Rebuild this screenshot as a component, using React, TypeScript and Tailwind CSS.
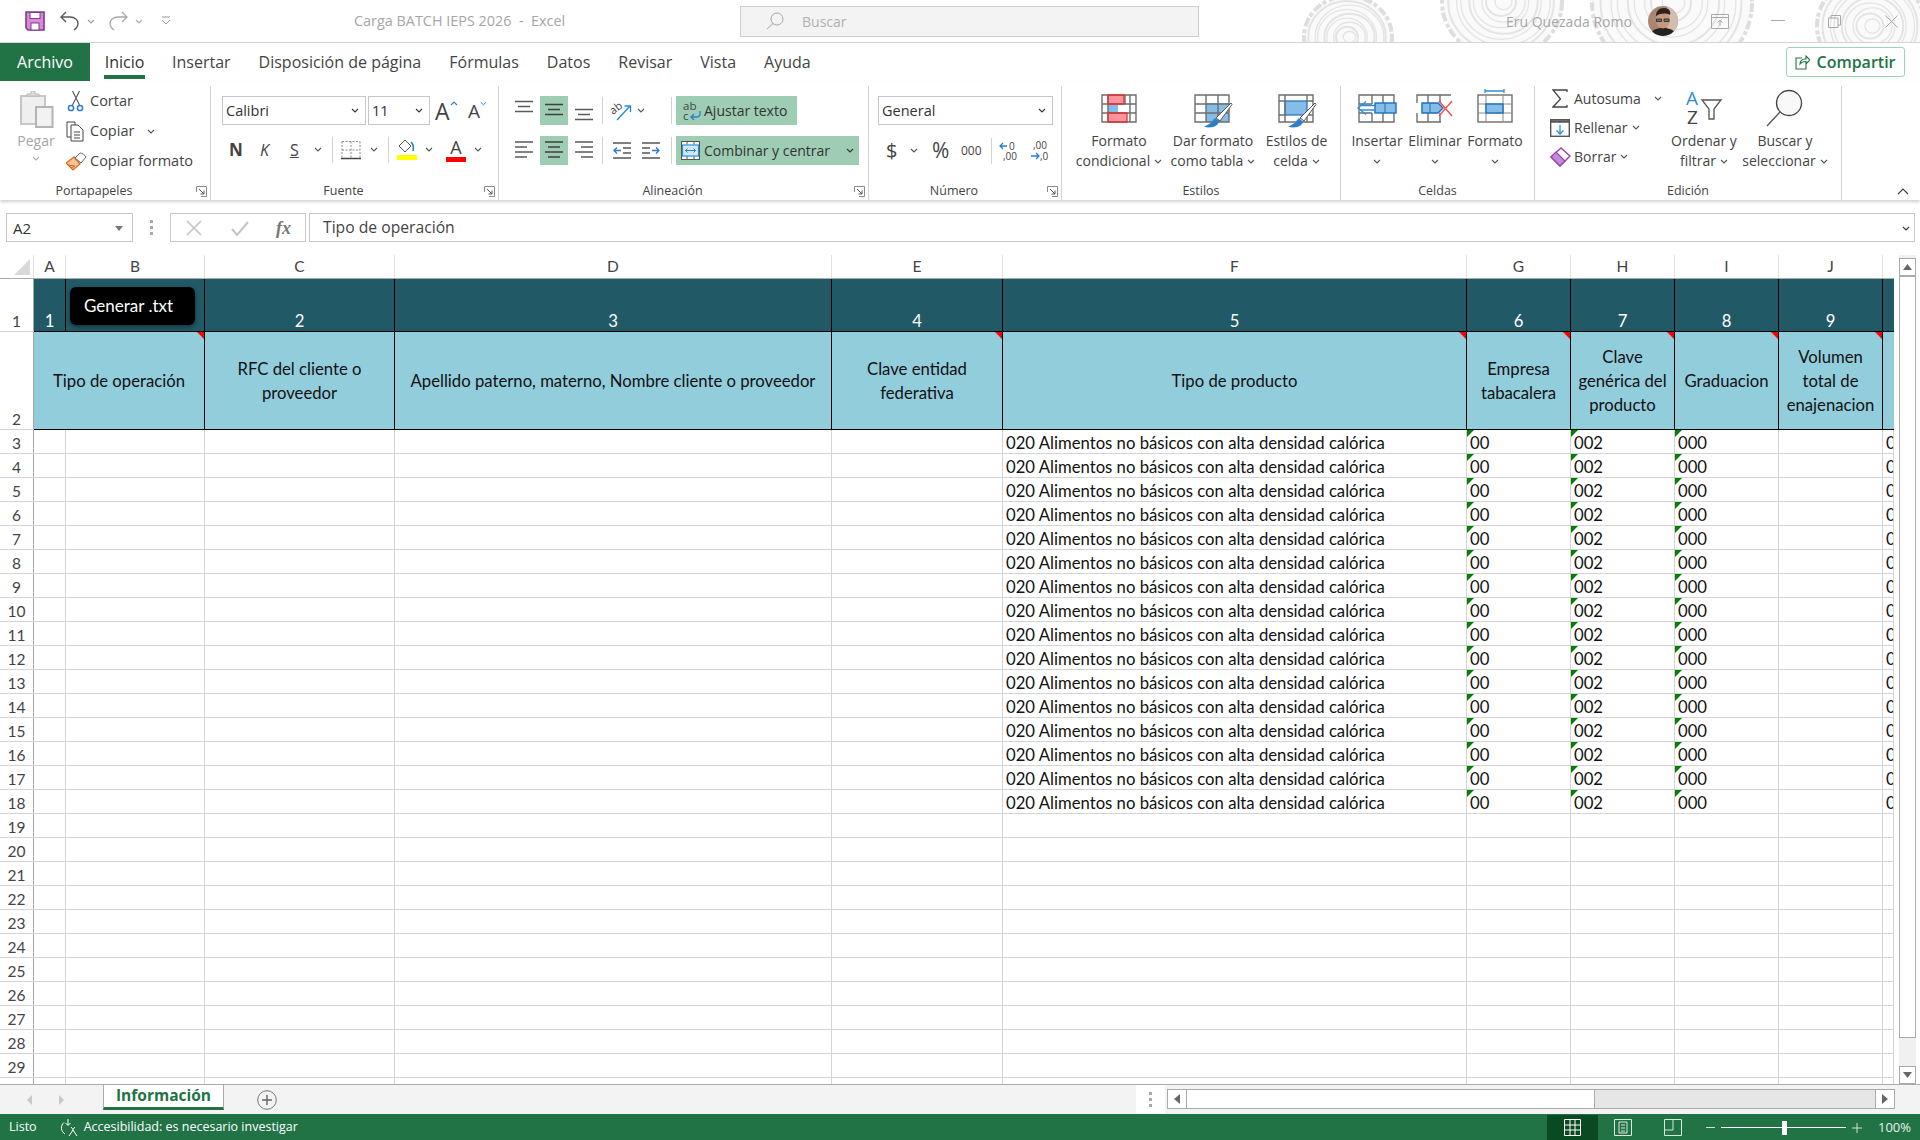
import type { ReactNode } from "react";

const ui = "font-['Open_Sans',sans-serif]";
const cellFont = "font-['Lato',sans-serif]";

const ROWS_DATA = Array.from({ length: 16 }, (_, i) => i + 3);
const ROWS_EMPTY = Array.from({ length: 11 }, (_, i) => i + 19);

function Caret({ color = "#555", className = "" }: { color?: string; className?: string }) {
  return (
    <svg width="8" height="5" viewBox="0 0 8 5" className={className}>
      <path d="M1 1l3 3 3-3" fill="none" stroke={color} strokeWidth="1.1" />
    </svg>
  );
}

function Launcher() {
  return (
    <svg width="11" height="11" viewBox="0 0 11 11">
      <path d="M.5 6V.5H10.500V10.500H5" fill="none" stroke="#8a8a8a" />
      <path d="M3 3l5 5M8 4.500V8H4.500" fill="none" stroke="#555" />
    </svg>
  );
}

function Sep({ className = "h-[29px]" }: { className?: string }) {
  return <div className={`w-px bg-[#d2d2d2] ${className}`} />;
}

function Lines({ kind }: { kind: "top" | "mid" | "bot" | "left" | "center" | "right" }) {
  const d = {
    top: "M0 5.500h18M3 10.500h12M0 15.500h18",
    mid: "M0 8.500h18M3 13.500h12M0 18.500h18",
    bot: "M0 13.500h18M3 18.500h12M0 23.500h18",
    left: "M0 6h18M0 11h12M0 16h18M0 21h12",
    center: "M0 6h18M3 11h12M0 16h18M3 21h12",
    right: "M0 6h18M6 11h12M0 16h18M6 21h12",
  }[kind];
  return (
    <svg width="18" height="29" viewBox="0 0 18 29">
      <path d={d} stroke={kind === "mid" || kind === "center" ? "#3f3f3f" : "#5a5a5a"} strokeWidth="1.4" />
    </svg>
  );
}

function Select({ label, className }: { label: string; className: string }) {
  return (
    <div className={`flex h-[29px] items-center justify-between border border-[#c6c6c6] bg-white pl-[3px] pr-[6px] text-[14.500px] text-[#333] ${className}`}>
      <span>{label}</span>
      <Caret color="#333" />
    </div>
  );
}

function Group({ label, width, launcher, children }: { label: string; width: string; launcher?: boolean; children: ReactNode }) {
  return (
    <div className={`relative flex h-[114px] flex-col border-r border-[#d2d2d2] ${width}`}>
      <div className="h-[95px]">{children}</div>
      <div className={`flex h-[19px] items-center justify-center pt-[2px] text-[12.500px] text-[#444] ${launcher ? "pr-[22px]" : ""}`}>{label}</div>
      {launcher && (
        <div className="absolute bottom-[3px] right-[3px] flex">
          <Launcher />
        </div>
      )}
    </div>
  );
}

function BigLabel({ one, two, caretOnly }: { one: string; two?: string; caretOnly?: boolean }) {
  return (
    <div className="flex flex-col items-center text-[14px] leading-[20px] text-[#444]">
      <span className="whitespace-nowrap">{one}</span>
      {caretOnly ? (
        <span className="flex h-[20px] items-center">
          <Caret />
        </span>
      ) : (
        <span className="flex items-center gap-[4px] whitespace-nowrap">
          {two}
          <Caret />
        </span>
      )}
    </div>
  );
}

// big ribbon button: icon area is 45px tall so all labels sit on the same line
function BigButton({ w, pt = "pt-[8px]", className = "", icon, children }: { w: string; pt?: string; className?: string; icon: ReactNode; children: ReactNode }) {
  return (
    <div className={`flex flex-col items-center ${w} ${className}`}>
      <div className={`h-[45px] ${pt}`}>{icon}</div>
      {children}
    </div>
  );
}

function TitleBar() {
  return (
    <div className="relative flex h-[43px] items-center overflow-hidden border-b border-[#d4d4d4] bg-white">
      <svg width="1920" height="42" className="absolute left-0 top-0" fill="none">
        {[
          [1348, 37, 44],
          [1502, 2, 60],
          [1672, 3, 80],
          [1871, 26, 54],
        ].map(([cx, cy, r]) => (
          <g key={cx}>
            <ellipse cx={cx} cy={cy} rx={r} ry={r * 0.93} fill="#fafafa" stroke="#dedede" strokeWidth="4" strokeDasharray="9 2 4 3" />
            {[0.88, 0.78, 0.67, 0.57, 0.46, 0.36, 0.25, 0.14].map((k, i) => (
              <ellipse key={k} cx={cx + (i % 2 ? 1.500 : -1)} cy={cy} rx={r * k} ry={r * k * 0.93} stroke="#e4e4e4" strokeWidth={i % 3 === 0 ? 2 : 1.300} />
            ))}
          </g>
        ))}
      </svg>
      <div className="relative flex w-full items-center">
        <svg width="20" height="20" viewBox="0 0 20 20" className="ml-[25px]">
          <path d="M1 1h18v18H3l-2-2z" fill="#d88ad6" stroke="#7f3a8f" strokeWidth="1.600" />
          <rect x="5" y="1.500" width="10" height="6" fill="#fff" stroke="#7f3a8f" />
          <rect x="6" y="12" width="8" height="7" fill="#fff" stroke="#7f3a8f" />
        </svg>
        <svg width="20" height="20" viewBox="0 0 20 20" className="ml-[15px]">
          <path d="M6 1L1 6l5 5M1 6h9c5 0 8 3 8 6.500 0 3-2 5-4 6.500" fill="none" stroke="#555" strokeWidth="1.300" />
        </svg>
        <Caret color="#999" className="ml-[7px]" />
        <svg width="20" height="20" viewBox="0 0 20 20" className="ml-[13px]">
          <path d="M14 1l5 5-5 5M19 6h-9C5 6 2 9 2 12.500c0 3 2 5 4 6.500" fill="none" stroke="#a8a8a8" strokeWidth="1.300" />
        </svg>
        <Caret color="#aaa" className="ml-[7px]" />
        <svg width="10" height="10" viewBox="0 0 10 10" className="ml-[18px]">
          <path d="M1 1h8M1 4l4 4 4-4" fill="none" stroke="#999" />
        </svg>
        <span className="ml-[183px] w-[217px] whitespace-pre text-[14.400px] text-[#a6a6a6]">Carga BATCH IEPS 2026  -  Excel</span>
        <div className="ml-[169px] flex h-[31px] w-[459px] items-center border border-[#cdcdcd] bg-[#f3f3f3] pl-[25px] text-[14px] text-[#b0b0b0]">
          <svg width="18" height="18" viewBox="0 0 18 18">
            <circle cx="11" cy="7" r="6" fill="none" stroke="#a6a6a6" />
            <path d="M7 11.500L1 17" stroke="#a6a6a6" />
          </svg>
          <span className="ml-[18px]">Buscar</span>
        </div>
        <span className="ml-[307px] w-[128px] whitespace-nowrap text-[14px] text-[#a6a6a6]">Eru Quezada Romo</span>
        <svg width="30" height="30" viewBox="0 0 30 30" className="ml-[14px]">
          <clipPath id="av">
            <circle cx="15" cy="15" r="15" />
          </clipPath>
          <g clipPath="url(#av)">
            <rect width="30" height="30" fill="#a98672" />
            <rect x="19" width="11" height="30" fill="#d2bcae" />
            <path d="M2 30c1-6 6-8 13-8s12 2 13 8z" fill="#242120" />
            <ellipse cx="15" cy="14" rx="7" ry="8.500" fill="#c8987e" />
            <path d="M8 10c0-5 3-8 8-8s7 3 6 7c-4-2-9-2-14 1z" fill="#2b2322" />
            <path d="M8.500 13h5v2.500h-5zM16 13h5v2.500h-5z" fill="#55806c" stroke="#222" strokeWidth=".8" />
          </g>
        </svg>
        <svg width="18" height="15" viewBox="0 0 18 15" className="ml-[33px]">
          <path d="M.5.500h17v14H.5zM.5 3.500h17M9 12V6M6.500 8.500L9 6l2.500 2.500" fill="none" stroke="#a8a8a8" />
        </svg>
        <svg width="14" height="2" className="ml-[42px]">
          <rect width="14" height="1" fill="#a8a8a8" />
        </svg>
        <svg width="13" height="13" viewBox="0 0 13 13" className="ml-[43px]">
          <path d="M.5 3h9.500v9.500H.5zM3 3V.5h9.500V10H10" fill="none" stroke="#a8a8a8" />
        </svg>
        <svg width="13" height="13" viewBox="0 0 13 13" className="ml-[44px]">
          <path d="M.5.500l12 12M12.500.500l-12 12" stroke="#a8a8a8" />
        </svg>
      </div>
    </div>
  );
}

function TabsBar() {
  const tabs = ["Insertar", "Disposición de página", "Fórmulas", "Datos", "Revisar", "Vista", "Ayuda"];
  return (
    <div className="flex h-[38px] items-center bg-white text-[16px] text-[#444]">
      <div className="flex h-full w-[90px] items-center justify-center bg-[#217346] text-white">Archivo</div>
      <div className="relative ml-[14px] flex h-full w-[41px] items-center justify-center font-medium text-[#333]">
        Inicio
        <div className="absolute bottom-[2px] left-0 h-[4px] w-full bg-[#217346]" />
      </div>
      <div className="ml-[27px] flex gap-[28px] whitespace-nowrap">
        {tabs.map((t) => (
          <span key={t}>{t}</span>
        ))}
      </div>
      <div className="ml-auto mr-[15px] flex h-[30px] w-[119px] items-center justify-center gap-[6px] rounded-[3px] border border-[#9fd3b6] text-[16px] font-semibold text-[#217346]">
        <svg width="15" height="15" viewBox="0 0 15 15">
          <path d="M7 3H1v11h10V9M5 9c0-3 2-5 5-5h1V1l4 4-4 4V6.500C8 6.500 6 7.500 5 9z" fill="none" stroke="#217346" strokeWidth="1.100" />
        </svg>
        Compartir
      </div>
    </div>
  );
}

function Clipboard() {
  return (
    <div className="flex">
      <div className="ml-[17px] flex w-[38px] flex-col items-center pt-[5px] text-[14px] text-[#a6a6a6]">
        <svg width="36" height="37" viewBox="0 0 36 37">
          <path d="M3 5h24v28H3z" fill="#efefef" stroke="#c6c6c6" strokeWidth="2" />
          <path d="M9 5V3h4V0h4v3h4v2z" fill="#ddd" stroke="#bbb" />
          <rect x="18" y="16" width="16.500" height="20" fill="#f2f2f2" stroke="#b4b4b4" strokeWidth="2" />
        </svg>
        <span className="mt-[3px] leading-[20px]">Pegar</span>
        <Caret color="#aaa" className="mt-[5px]" />
      </div>
      <div className="ml-[11px] flex flex-col text-[14.500px] leading-[30px] text-[#444]">
        <div className="flex items-center">
          <svg width="24" height="22" viewBox="0 0 24 22">
            <path d="M6.500 1l7 14M13.500 1l-7 14" stroke="#555" fill="none" strokeWidth="1.100" />
            <circle cx="5" cy="18" r="2.600" fill="none" stroke="#2b7cd3" strokeWidth="1.500" />
            <circle cx="14" cy="18" r="2.600" fill="none" stroke="#2b7cd3" strokeWidth="1.500" />
          </svg>
          <span>Cortar</span>
        </div>
        <div className="flex items-center">
          <svg width="21" height="21" viewBox="0 0 21 21">
            <path d="M5 16H1V1h8v3" fill="none" stroke="#444" />
            <path d="M5 4h7l5 5v11H5zM8 11h6M8 14h6M8 17h6" fill="#fff" stroke="#444" />
          </svg>
          <span className="ml-[3px]">Copiar</span>
          <Caret className="ml-[13px]" />
        </div>
        <div className="flex items-center">
          <svg width="21" height="19" viewBox="0 0 21 19">
            <path d="M0 11l8-6 6 7-7 6z" fill="#f8c592" stroke="#d9661f" strokeWidth="1.200" />
            <path d="M9 6l5-5c2 0 5 2 6 4l-5 6z" fill="#fff" stroke="#666" />
            <path d="M2 13l7 1M5 16l4-2" stroke="#d9661f" />
          </svg>
          <span className="ml-[3px]">Copiar formato</span>
        </div>
      </div>
    </div>
  );
}

function FontGroup() {
  return (
    <div className="flex flex-col pl-[11px] pt-[10px]">
      <div className="flex h-[29px] items-center">
        <Select label="Calibri" className="w-[144px]" />
        <Select label="11" className="ml-[2px] w-[62px]" />
        <span className="ml-[5px] flex w-[26px] items-start text-[23px] leading-[26px] text-[#444]">
          A<Caret color="#2b7cd3" className="mt-[3px] rotate-180" />
        </span>
        <span className="ml-[7px] flex w-[19px] items-start text-[19px] leading-[26px] text-[#444]">
          A<Caret color="#2b7cd3" className="mt-[3px]" />
        </span>
      </div>
      <div className="mt-[11px] flex h-[29px] items-center pb-[2px] text-[#444]">
        <span className="ml-[7px] w-[14px] text-[17px] font-bold">N</span>
        <span className="ml-[17px] w-[10px] text-[16px] italic">K</span>
        <span className="ml-[20px] w-[10px] text-[16px] underline">S</span>
        <Caret className="ml-[14px]" />
        <Sep className="ml-[10px] h-[26px]" />
        <svg width="20" height="20" viewBox="0 0 20 20" className="ml-[8px]">
          <path d="M1 1.500h18M1 1.500v17M19 1.500v17M10 1.500v17M1 10h18" stroke="#888" strokeDasharray="2 1.500" fill="none" />
          <path d="M0 18.500h20" stroke="#444" strokeWidth="1.500" />
        </svg>
        <Caret className="ml-[9px]" />
        <Sep className="ml-[10px] h-[26px]" />
        <div className="ml-[8px] flex w-[20px] flex-col items-center">
          <svg width="18" height="15" viewBox="0 0 18 15">
            <path d="M7 1L1 7l6 6 6-6z" fill="#fff" stroke="#555" />
            <path d="M13 3c2 2 3 5 2 9" fill="none" stroke="#2b7cd3" strokeWidth="1.600" />
          </svg>
          <div className="mt-[1px] h-[5px] w-[20px] bg-[#ffff00]" />
        </div>
        <Caret className="ml-[8px]" />
        <div className="ml-[13px] flex w-[20px] flex-col items-center">
          <span className="h-[18px] text-[18px] leading-[18px]">A</span>
          <div className="mt-[1px] h-[5px] w-[20px] bg-[#ff0000]" />
        </div>
        <Caret className="ml-[8px]" />
      </div>
    </div>
  );
}

function AlignGroup() {
  return (
    <div className="flex flex-col pl-[16px] pt-[10px] text-[14px] text-[#333]">
      <div className="flex h-[29px] items-center">
        <Lines kind="top" />
        <div className="ml-[7px] flex h-[29px] w-[28px] items-center justify-center bg-[#9fcdb3]">
          <Lines kind="mid" />
        </div>
        <div className="ml-[7px] flex">
          <Lines kind="bot" />
        </div>
        <Sep className="ml-[9px] h-[27px]" />
        <svg width="22" height="22" viewBox="0 0 22 22" className="ml-[8px] overflow-visible">
          <text x="-1" y="12" fontSize="11" fill="#444" transform="rotate(-38 5 9)">ab</text>
          <path d="M6 20L19 6M13.500 6H19.500v6" fill="none" stroke="#2b8fd8" strokeWidth="1.400" />
        </svg>
        <Caret className="ml-[4px]" />
        <Sep className="ml-[26px] h-[27px]" />
        <div className="ml-[4px] flex h-[29px] w-[121px] items-center gap-[3px] bg-[#9fcdb3] pl-[7px]">
          <svg width="18" height="22" viewBox="0 0 18 22" className="overflow-visible">
            <text x="0" y="10" fontSize="11.500" fill="#444">ab</text>
            <text x="0" y="20" fontSize="11.500" fill="#444">c</text>
            <path d="M17 11v3c0 2-2 3-4 3H8M11 14l-3 3 3 3" fill="none" stroke="#2b7cd3" strokeWidth="1.300" />
          </svg>
          <span>Ajustar texto</span>
        </div>
      </div>
      <div className="mt-[11px] flex h-[29px] items-center">
        <Lines kind="left" />
        <div className="ml-[7px] flex h-[29px] w-[28px] items-center justify-center bg-[#9fcdb3]">
          <Lines kind="center" />
        </div>
        <div className="ml-[7px] flex">
          <Lines kind="right" />
        </div>
        <Sep className="ml-[9px] h-[27px]" />
        <svg width="18" height="20" viewBox="0 0 18 20" className="ml-[10px]">
          <path d="M0 2h18M10 7h8M10 12h8M0 17h18" stroke="#555" strokeWidth="1.300" />
          <path d="M8 9.500H1M4 6.500l-3 3 3 3" fill="none" stroke="#2b7cd3" strokeWidth="1.300" />
        </svg>
        <svg width="18" height="20" viewBox="0 0 18 20" className="ml-[11px]">
          <path d="M0 2h18M0 7h8M0 12h8M0 17h18" stroke="#555" strokeWidth="1.300" />
          <path d="M10 9.500h7M14 6.500l3 3-3 3" fill="none" stroke="#2b7cd3" strokeWidth="1.300" />
        </svg>
        <Sep className="ml-[11px] h-[27px]" />
        <div className="ml-[4px] flex h-[29px] w-[183px] items-center bg-[#9fcdb3] pl-[5px]">
          <svg width="19" height="19" viewBox="0 0 19 19">
            <rect x=".5" y=".5" width="18" height="18" fill="#fff" stroke="#555" />
            <path d="M6 .5v3M13 .5v3M6 15v3.500M13 15v3.500" stroke="#555" />
            <rect x="1.500" y="4" width="16" height="11" fill="#d3e9f8" stroke="#2b8fd8" strokeWidth="1.200" />
            <path d="M4.500 9.500h10M6.500 7.500l-2 2 2 2M12.500 7.500l2 2-2 2" fill="none" stroke="#2b7cd3" />
          </svg>
          <span className="ml-[4px]">Combinar y centrar</span>
          <Caret color="#333" className="ml-[16px]" />
        </div>
      </div>
    </div>
  );
}

function NumberGroup() {
  return (
    <div className="flex flex-col pl-[9px] pt-[10px] text-[#444]">
      <Select label="General" className="w-[175px]" />
      <div className="mt-[11px] flex h-[29px] items-center">
        <span className="ml-[8px] w-[11px] text-[20px]">$</span>
        <Caret className="ml-[13px]" />
        <span className="ml-[14px] w-[20px] text-[21px] leading-[29px]">%</span>
        <span className="ml-[9px] w-[22px] text-[12px]">000</span>
        <Sep className="ml-[8px] h-[26px]" />
        <svg width="20" height="22" viewBox="0 0 20 22" className="ml-[7px] overflow-visible">
          <path d="M8 6H1M4 3L1 6l3 3" fill="none" stroke="#2b7cd3" strokeWidth="1.300" />
          <text x="10" y="10" fontSize="10" fill="#444">0</text>
          <text x="4" y="20" fontSize="10" fill="#444">,00</text>
        </svg>
        <svg width="20" height="22" viewBox="0 0 20 22" className="ml-[11px] overflow-visible">
          <text x="3" y="9" fontSize="10" fill="#444">,00</text>
          <path d="M1 16h8M6 13l3 3-3 3" fill="none" stroke="#2b7cd3" strokeWidth="1.300" />
          <text x="10" y="20" fontSize="10" fill="#444">,0</text>
        </svg>
      </div>
    </div>
  );
}

function Brush() {
  return (
    <g>
      <path d="M37 9l1 1.500L26 27l-4-3z" fill="#fff" stroke="#555" />
      <path d="M21 24c-3 3-4 6-11 8.500 5 2 13 1 15-4.500z" fill="#2f7fc8" />
    </g>
  );
}

function StylesGroup() {
  const frame = "M1 1h34v27H1zM1 10h34M1 19h34";
  return (
    <div className="flex pl-[11px]">
      <BigButton
        w="w-[92px]"
        icon={
          <svg width="36" height="30" viewBox="0 0 36 30">
            <rect x="7" y="1" width="16" height="9" fill="#f7949c" />
            <rect x="7" y="10" width="10" height="9" fill="#85bce8" />
            <rect x="7" y="19" width="19" height="9" fill="#f7949c" />
            <path d={`${frame}M7 1v27M24 1v9M29 1v27`} stroke="#6e6e6e" strokeWidth="1.400" fill="none" />
            <path d="M7 1h16v9H7zM7 19h19v9H7z" stroke="#dd3333" strokeWidth="1.300" fill="none" />
          </svg>
        }
      >
        <BigLabel one="Formato" two="condicional" />
      </BigButton>
      <BigButton
        w="w-[92px]"
        className="ml-[2px]"
        icon={
          <svg width="38" height="34" viewBox="0 0 38 34" className="overflow-visible">
            <rect x="12" y="9" width="23" height="19" fill="#85bce8" />
            <path d={`${frame}M12 1v27M24 1v27`} stroke="#6e6e6e" strokeWidth="1.400" fill="none" />
            <Brush />
          </svg>
        }
      >
        <BigLabel one="Dar formato" two="como tabla" />
      </BigButton>
      <BigButton
        w="w-[65px]"
        className="ml-[5px]"
        icon={
          <svg width="38" height="34" viewBox="0 0 38 34" className="overflow-visible">
            <rect x="7" y="7" width="22" height="14" fill="#85bce8" stroke="#1f6fb8" strokeWidth="1.200" />
            <path d="M1 1h34v27H1zM1 7h6M29 7h6M1 21h6M29 21h6M7 1v27M29 1v6M29 21v7" stroke="#6e6e6e" strokeWidth="1.400" fill="none" />
            <Brush />
          </svg>
        }
      >
        <BigLabel one="Estilos de" two="celda" />
      </BigButton>
    </div>
  );
}

function CellsGroup() {
  return (
    <div className="flex pl-[8px]">
      <BigButton
        w="w-[56px]"
        icon={
          <svg width="42" height="30" viewBox="0 0 42 30">
            <path d="M3 1h35v27H3zM16 1v9M16 19v9M27 1v27M3 10h13M3 19h13" stroke="#6e6e6e" strokeWidth="1.400" fill="none" />
            <rect x="19" y="9" width="21" height="10" fill="#85bce8" stroke="#1f6fb8" strokeWidth="1.400" />
            <path d="M29 9v10" stroke="#1f6fb8" />
            <path d="M10 7.500L2 14l8 6.500M4 11.500h15M4 16h15" fill="none" stroke="#2b8fd8" strokeWidth="1.300" />
          </svg>
        }
      >
        <BigLabel one="Insertar" caretOnly />
      </BigButton>
      <BigButton
        w="w-[60px]"
        icon={
          <svg width="38" height="30" viewBox="0 0 38 30">
            <path d="M1 9V1h34M1 19v9h24M12 1v8M24 1v8M12 19v9M24 19v9" stroke="#6e6e6e" strokeWidth="1.400" fill="none" />
            <path d="M6 9h16l5 5-5 5H6z" fill="#85bce8" stroke="#1f6fb8" strokeWidth="1.400" />
            <path d="M14 9v10" stroke="#1f6fb8" />
            <path d="M23 7l13 15M36 7L23 22" stroke="#f0514f" strokeWidth="1.400" />
          </svg>
        }
      >
        <BigLabel one="Eliminar" caretOnly />
      </BigButton>
      <BigButton
        w="w-[60px]"
        pt="pt-[3px]"
        icon={
          <svg width="36" height="35" viewBox="0 0 36 35">
            <path d="M8 2h19M8 0v4M27 0v4" stroke="#2b8fd8" strokeWidth="1.300" fill="none" />
            <rect x="1" y="6" width="34" height="27" fill="#fff" stroke="#6e6e6e" strokeWidth="1.400" />
            <path d="M9 6v27M26 6v27M1 15h34M1 24h34" stroke="#8a8a8a" fill="none" />
            <rect x="9" y="15" width="17" height="9" fill="#85bce8" stroke="#1f6fb8" strokeWidth="1.400" />
          </svg>
        }
      >
        <BigLabel one="Formato" caretOnly />
      </BigButton>
    </div>
  );
}

function EditGroup() {
  return (
    <div className="flex pl-[14px] text-[14px] text-[#444]">
      <div className="mt-[-2px] flex w-[117px] flex-col">
        <div className="flex h-[29px] items-center">
          <svg width="18" height="20" viewBox="0 0 18 20" className="ml-[3px]">
            <path d="M15 3V1H1l7.500 9L1 18h14v-2" fill="none" stroke="#444" strokeWidth="1.300" />
          </svg>
          <span className="ml-[4px] leading-none">Autosuma</span>
          <Caret className="ml-[13px]" />
        </div>
        <div className="flex h-[29px] items-center">
          <svg width="20" height="18" viewBox="0 0 20 18" className="ml-[1px]">
            <rect x=".7" y=".7" width="18.600" height="16.600" fill="#fff" stroke="#555" strokeWidth="1.400" />
            <path d="M1 2.500h18" stroke="#555" strokeWidth="2.500" />
            <path d="M10 6v9M6.500 11.500L10 15l3.500-3.500" fill="none" stroke="#2b8fd8" strokeWidth="1.300" />
          </svg>
          <span className="ml-[4px] leading-none">Rellenar</span>
          <Caret className="ml-[4px]" />
        </div>
        <div className="flex h-[29px] items-center">
          <svg width="21" height="20" viewBox="0 0 21 20" className="ml-[1px]">
            <path d="M1 10L11 1l9 8-10 10z" fill="#fff" stroke="#9b3fb0" strokeWidth="1.400" />
            <path d="M1 10l9 9 5-5-9-9z" fill="#c58ad6" stroke="#9b3fb0" strokeWidth="1.200" />
          </svg>
          <span className="ml-[3px] leading-none">Borrar</span>
          <Caret className="ml-[4px]" />
        </div>
      </div>
      <BigButton
        w="w-[76px]"
        pt="pt-[4px]"
        icon={
          <svg width="36" height="36" viewBox="0 0 36 36" className="overflow-visible">
            <text x="0" y="15" fontSize="19" fill="#2b8fd8">A</text>
            <text x="1" y="34" fontSize="19" fill="#444">Z</text>
            <path d="M16 10h19l-7 9v10h-5V19z" fill="#fff" stroke="#555" strokeWidth="1.300" />
          </svg>
        }
      >
        <BigLabel one="Ordenar y" two="filtrar" />
      </BigButton>
      <BigButton
        w="w-[88px]"
        pt="pt-[4px]"
        className="ml-[-1px]"
        icon={
          <svg width="38" height="38" viewBox="0 0 38 38" className="overflow-visible">
            <circle cx="23" cy="13" r="12.500" fill="#f9f9f9" stroke="#444" strokeWidth="1.300" />
            <path d="M14 22L1 36" stroke="#555" strokeWidth="1.300" />
          </svg>
        }
      >
        <BigLabel one="Buscar y" two="seleccionar" />
      </BigButton>
    </div>
  );
}

function Ribbon() {
  return (
    <div className={`relative z-10 flex h-[119px] bg-white pt-[5px] shadow-[0_2px_3px_rgba(0,0,0,0.18)] ${ui}`}>
      <Group label="Portapapeles" width="w-[211px]" launcher>
        <Clipboard />
      </Group>
      <Group label="Fuente" width="w-[288px]" launcher>
        <FontGroup />
      </Group>
      <Group label="Alineación" width="w-[370px]" launcher>
        <AlignGroup />
      </Group>
      <Group label="Número" width="w-[193px]" launcher>
        <NumberGroup />
      </Group>
      <Group label="Estilos" width="w-[279px]">
        <StylesGroup />
      </Group>
      <Group label="Celdas" width="w-[194px]">
        <CellsGroup />
      </Group>
      <Group label="Edición" width="w-[307px]">
        <EditGroup />
      </Group>
      <div className="flex flex-1 items-end justify-end pb-[5px] pr-[11px]">
        <svg width="12" height="7" viewBox="0 0 12 7">
          <path d="M1 6l5-5 5 5" fill="none" stroke="#444" strokeWidth="1.200" />
        </svg>
      </div>
    </div>
  );
}

function FormulaBar() {
  return (
    <div className={`flex h-[55px] bg-white pl-[6px] pr-[5px] pt-[13px] ${ui}`}>
      <div className="flex h-[29px] w-[127px] items-center justify-between border border-[#c6c6c6] pl-[6px] pr-[9px] pt-[1px] text-[15px] text-[#333]">
        A2
        <svg width="8" height="5" viewBox="0 0 8 5">
          <path d="M0 0h8L4 5z" fill="#777" />
        </svg>
      </div>
      <div className="flex h-[29px] w-[37px] items-center justify-center">
        <svg width="3" height="15" viewBox="0 0 3 15">
          <path d="M0 0h3v3H0zM0 6h3v3H0zM0 12h3v3H0z" fill="#a8a8a8" />
        </svg>
      </div>
      <div className="flex h-[29px] w-[136px] items-center border border-[#c6c6c6] pl-[15px]">
        <svg width="16" height="16" viewBox="0 0 16 16">
          <path d="M1 1l14 14M15 1L1 15" stroke="#c4c4c4" strokeWidth="1.600" />
        </svg>
        <svg width="18" height="16" viewBox="0 0 18 16" className="ml-[29px]">
          <path d="M1 9l5 6L17 2" fill="none" stroke="#c4c4c4" strokeWidth="2" />
        </svg>
        <span className="ml-[27px] font-['Liberation_Serif',serif] text-[18px] font-bold italic leading-none text-[#777]">fx</span>
      </div>
      <div className="ml-[3px] flex h-[29px] flex-1 items-center justify-between border border-[#c6c6c6] pl-[13px] pr-[4px] pt-[1px] text-[15.700px] text-[#444]">
        Tipo de operación
        <Caret color="#333" />
      </div>
    </div>
  );
}

const WA = "w-[32px]";
const WB = "w-[139px]";
const WC = "w-[190px]";
const WD = "w-[437px]";
const WE = "w-[171px]";
const WF = "w-[464px]";
const WN = "w-[104px]";
const WK = "w-[11px]";

function ColHead({ label, w }: { label: string; w: string }) {
  return <div className={`flex h-full items-center justify-center border-r border-[#e1e1e1] pt-[1px] ${w}`}>{label}</div>;
}

function ColumnHeaders() {
  return (
    <div className="flex h-[24px] border-b border-[#ababab] text-[15.500px] text-[#444]">
      <div className="flex h-full w-[34px] items-end justify-end border-r border-[#e1e1e1] pb-[3px] pr-[3px]">
        <div className="h-0 w-0 border-b-[16px] border-l-[16px] border-b-[#d9d9d9] border-l-transparent" />
      </div>
      <ColHead label="A" w={WA} />
      <ColHead label="B" w={WB} />
      <ColHead label="C" w={WC} />
      <ColHead label="D" w={WD} />
      <ColHead label="E" w={WE} />
      <ColHead label="F" w={WF} />
      <ColHead label="G" w={WN} />
      <ColHead label="H" w={WN} />
      <ColHead label="I" w={WN} />
      <ColHead label="J" w={WN} />
      <div className={WK} />
    </div>
  );
}

function RowHead({ n, className = "items-center" }: { n?: number; className?: string }) {
  return (
    <div className={`flex h-full w-[34px] shrink-0 justify-center border-r border-[#a6a6a6] bg-white text-[15.500px] leading-[20px] text-[#444] ${className}`}>
      {n}
    </div>
  );
}

function Band({ n, w }: { n?: number; w: string }) {
  return (
    <div className={`flex h-full shrink-0 items-end justify-center border-r border-black leading-[20px] text-white ${w}`}>
      {n}
    </div>
  );
}

function RedMark() {
  return <div className="absolute right-0 top-0 h-0 w-0 border-l-[7px] border-t-[7px] border-l-transparent border-t-[#ff0000]" />;
}

function HeadCell({ w, mark, children }: { w: string; mark?: boolean; children?: ReactNode }) {
  return (
    <div className={`relative flex h-full shrink-0 items-center justify-center border-r border-black text-center leading-[24px] ${w}`}>
      {mark && <RedMark />}
      {children}
    </div>
  );
}

function GreenMark() {
  return <div className="absolute left-0 top-0 h-0 w-0 border-r-[7px] border-t-[7px] border-r-transparent border-t-[#008000]" />;
}

function Cell({ w, mark, children }: { w: string; mark?: boolean; children?: ReactNode }) {
  return (
    <div className={`relative flex h-full shrink-0 items-center overflow-hidden whitespace-nowrap border-r border-[#d4d4d4] pl-[3px] pt-[2px] leading-[20px] ${w}`}>
      {mark && <GreenMark />}
      {children}
    </div>
  );
}

function DataRow({ n, filled }: { n?: number; filled: boolean }) {
  return (
    <div className="flex h-[24px] shrink-0 border-b border-[#d4d4d4]">
      <RowHead n={n} className="items-center pt-[2px]" />
      <Cell w={WA} />
      <Cell w={WB} />
      <Cell w={WC} />
      <Cell w={WD} />
      <Cell w={WE} />
      <Cell w={WF}>{filled && "020 Alimentos no básicos con alta densidad calórica"}</Cell>
      <Cell w={WN} mark={filled}>{filled && "00"}</Cell>
      <Cell w={WN} mark={filled}>{filled && "002"}</Cell>
      <Cell w={WN} mark={filled}>{filled && "000"}</Cell>
      <Cell w={WN} />
      <Cell w={WK}>{filled && "0"}</Cell>
    </div>
  );
}

function Sheet() {
  return (
    <div className={`relative h-full w-[1894px] shrink-0 overflow-hidden text-[16.700px] text-[#111] ${cellFont}`}>
      <ColumnHeaders />
      <div className="flex h-[53px]">
        <RowHead n={1} className="items-end border-b border-b-[#d4d4d4]" />
        <div className="flex flex-1 border-b border-black bg-[#215967]">
          <Band n={1} w={WA} />
          <Band w={WB} />
          <Band n={2} w={WC} />
          <Band n={3} w={WD} />
          <Band n={4} w={WE} />
          <Band n={5} w={WF} />
          <Band n={6} w={WN} />
          <Band n={7} w={WN} />
          <Band n={8} w={WN} />
          <Band n={9} w={WN} />
        </div>
      </div>
      <div className="flex h-[98px]">
        <RowHead n={2} className="items-end border-b border-b-[#d4d4d4]" />
        <div className="flex flex-1 border-b border-black bg-[#92cddc]">
          <HeadCell w="w-[171px]" mark>Tipo de operación</HeadCell>
          <HeadCell w={WC}>RFC del cliente o<br />proveedor</HeadCell>
          <HeadCell w={WD}>Apellido paterno, materno, Nombre cliente o proveedor</HeadCell>
          <HeadCell w={WE} mark>Clave entidad<br />federativa</HeadCell>
          <HeadCell w={WF} mark>Tipo de producto</HeadCell>
          <HeadCell w={WN} mark>Empresa<br />tabacalera</HeadCell>
          <HeadCell w={WN} mark>Clave<br />genérica del<br />producto</HeadCell>
          <HeadCell w={WN} mark>Graduacion</HeadCell>
          <HeadCell w={WN} mark>Volumen<br />total de<br />enajenacion</HeadCell>
        </div>
      </div>
      {ROWS_DATA.map((n) => (
        <DataRow key={n} n={n} filled />
      ))}
      {ROWS_EMPTY.map((n) => (
        <DataRow key={n} n={n} filled={false} />
      ))}
      <DataRow filled={false} />
      <div className="absolute left-[70px] top-[32px] flex h-[38px] w-[125px] items-center rounded-[6px] bg-black pl-[14px] text-[17px] text-white shadow-[0_2px_4px_rgba(0,0,0,0.4)]">
        Generar .txt
      </div>
    </div>
  );
}

function ScrollButton({ up }: { up: boolean }) {
  return (
    <div className="flex h-[18px] shrink-0 items-center justify-center border border-[#ababab] bg-white">
      <svg width="9" height="6" viewBox="0 0 9 6">
        <path d={up ? "M4.500 0L9 6H0z" : "M0 0h9L4.500 6z"} fill="#666" />
      </svg>
    </div>
  );
}

function VerticalScroll() {
  return (
    <div className="ml-[5px] flex w-[17px] flex-col bg-[#f0f0f0] pt-[3px]">
      <ScrollButton up />
      <div className="h-[762px] border border-[#ababab] bg-white" />
      <div className="flex-1" />
      <ScrollButton up={false} />
    </div>
  );
}

function SheetBar() {
  return (
    <div className={`flex h-[30px] items-start border-t border-[#ababab] bg-[#f3f3f3] ${ui}`}>
      <svg width="40" height="12" viewBox="0 0 40 12" className="ml-[26px] mt-[9px]">
        <path d="M6 1v10L1 6zM33 1v10l5-5z" fill="#c8c8c8" />
      </svg>
      <div className="ml-[37px] flex h-[25px] w-[121px] items-center justify-center border-x border-b-[3px] border-x-[#ababab] border-b-[#217346] bg-white text-[15.500px] font-bold text-[#217346]">
        Información
      </div>
      <svg width="20" height="20" viewBox="0 0 20 20" className="ml-[33px] mt-[5px]">
        <circle cx="10" cy="10" r="9.300" fill="none" stroke="#777" />
        <path d="M10 5v10M5 10h10" stroke="#666" strokeWidth="1.400" />
      </svg>
      <div className="ml-[859px] flex h-[29px] w-[29px] items-center justify-center bg-white">
        <svg width="3" height="15" viewBox="0 0 3 15">
          <path d="M0 0h3v3H0zM0 6h3v3H0zM0 12h3v3H0z" fill="#a8a8a8" />
        </svg>
      </div>
      <div className="ml-[2px] mt-[4px] flex h-[20px] w-[728px] border border-[#ababab] bg-[#e6e6e6]">
        <div className="flex w-[19px] items-center justify-center border-r border-[#ababab] bg-white">
          <svg width="6" height="10" viewBox="0 0 6 10">
            <path d="M6 0v10L0 5z" fill="#666" />
          </svg>
        </div>
        <div className="w-[408px] border-r border-[#ababab] bg-white" />
        <div className="flex-1" />
        <div className="flex w-[19px] items-center justify-center border-l border-[#ababab] bg-white">
          <svg width="6" height="10" viewBox="0 0 6 10">
            <path d="M0 0v10l6-5z" fill="#666" />
          </svg>
        </div>
      </div>
    </div>
  );
}

function StatusBar() {
  return (
    <div className={`flex h-[26px] items-center bg-[#217346] pt-[1px] text-[12.500px] text-white ${ui}`}>
      <span className="ml-[9px]">Listo</span>
      <svg width="20" height="20" viewBox="0 0 20 20" className="ml-[22px]">
        <path d="M9 1v6M6.500 5L9 7.500 11.500 5M5 4.500a7 7 0 0 0 1 11.500" fill="none" stroke="#fff" />
        <path d="M12 9l2 2.500L16 9M10 18l4-6 4 6M14 11.500V13" fill="none" stroke="#fff" />
      </svg>
      <span className="ml-[5px]">Accesibilidad: es necesario investigar</span>
      <div className="ml-auto flex h-full w-[51px] items-center justify-center bg-[#0a4a22]">
        <svg width="17" height="17" viewBox="0 0 17 17">
          <path d="M.5.500h16v16H.5zM6 .5v16M11 .5v16M.5 6h16M.5 11h16" fill="none" stroke="#fff" />
        </svg>
      </div>
      <svg width="18" height="17" viewBox="0 0 18 17" className="ml-[16px]">
        <path d="M.5.500h17v16H.5zM5 3h8v11H5zM7 6h4M7 9h4M7 12h4" fill="none" stroke="#d8e8dd" />
      </svg>
      <svg width="18" height="17" viewBox="0 0 18 17" className="ml-[32px]">
        <path d="M.5.500h17v16H.5zM.5 11H9V.5" fill="none" stroke="#d8e8dd" />
      </svg>
      <span className="ml-[24px] h-px w-[9px] bg-[#cfe3d6]" />
      <div className="relative ml-[6px] flex h-[18px] w-[125px] items-center">
        <div className="h-px w-full bg-white" />
        <div className="absolute left-[61px] top-[2px] h-[14px] w-[5px] bg-white" />
      </div>
      <svg width="10" height="10" viewBox="0 0 10 10" className="ml-[6px]">
        <path d="M5 0v10M0 5h10" stroke="#cfe3d6" />
      </svg>
      <span className="ml-[16px] mr-[10px] w-[32px] whitespace-nowrap text-[13px] text-[#e8f1eb]">100%</span>
    </div>
  );
}

export default function App() {
  return (
    <div className="flex h-[1140px] w-[1920px] flex-col overflow-hidden bg-white">
      <div className={ui}>
        <TitleBar />
        <TabsBar />
      </div>
      <Ribbon />
      <FormulaBar />
      <div className="flex h-[829px]">
        <Sheet />
        <VerticalScroll />
      </div>
      <SheetBar />
      <StatusBar />
    </div>
  );
}
